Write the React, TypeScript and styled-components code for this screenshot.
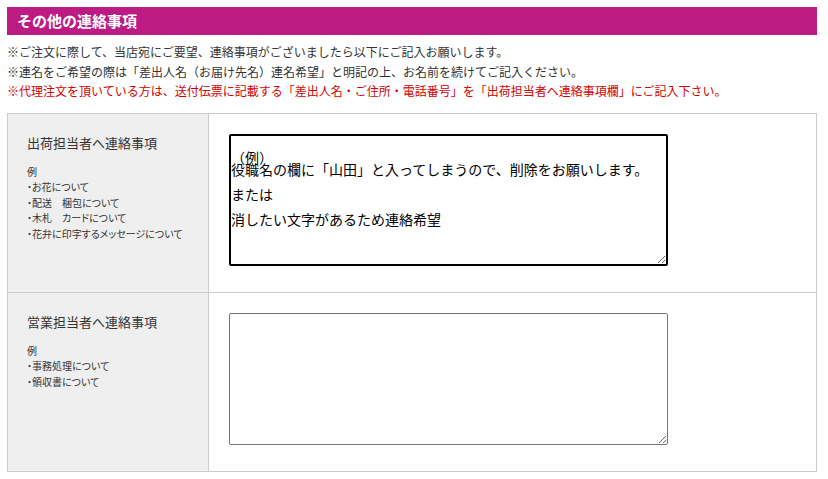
import React from "react";
import styled, { createGlobalStyle } from "styled-components";

const GlobalStyle = createGlobalStyle`
  html, body { margin: 0; padding: 0; background: #fff; }
  body { font-family: "Noto Sans CJK JP", "Noto Sans", sans-serif; color: #333; }
`;

const Page = styled.div`
  padding: 7px 0 0 7px;
  width: 810px;
`;

const SectionBar = styled.h2`
  margin: 0;
  height: 28px;
  background: #bc1b84;
  color: #fff;
  font-size: 15px;
  font-weight: bold;
  line-height: 28px;
  padding-left: 10px;
`;

const Notes = styled.div`
  margin: 7px 0 12px;
`;

const Note = styled.p<{ $red?: boolean }>`
  margin: 0;
  font-size: 12px;
  line-height: 19.5px;
  color: ${(p) => (p.$red ? "#d40000" : "#333")};
  white-space: nowrap;
`;

const Table = styled.div`
  border: 1px solid #ccc;
  display: grid;
  grid-template-columns: 201px 1fr;
`;

const LabelCell = styled.div<{ $last?: boolean }>`
  box-sizing: border-box;
  background: #efefef;
  border-right: 1px solid #ccc;
  border-bottom: ${(p) => (p.$last ? "none" : "1px solid #ccc")};
  padding: 20px 0 0 19px;
`;

const ValueCell = styled.div<{ $last?: boolean }>`
  border-bottom: ${(p) => (p.$last ? "none" : "1px solid #ccc")};
  padding: 20px 20px 26px 20px;
`;

const LabelTitle = styled.div`
  font-size: 13px;
  line-height: 18px;
  color: #333;
  margin-bottom: 12px;
`;

const ExampleLine = styled.div`
  font-size: 10px;
  line-height: 15.5px;
  color: #333;
  font-feature-settings: "palt";
  white-space: nowrap;
`;

const Memo = styled.textarea<{ $active?: boolean }>`
  display: block;
  box-sizing: border-box;
  width: 439px;
  height: 132px;
  margin: 0;
  padding: ${(p) => (p.$active ? "15px 0 0 0" : "15px 1px 0 1px")};
  font-family: "Noto Sans CJK JP", sans-serif;
  font-size: 14px;
  line-height: 12.5px;
  color: #000;
  background: #fff;
  border: ${(p) => (p.$active ? "2px solid #000" : "1px solid #767676")};
  border-radius: 2px;
  outline: none;
  resize: both;
  overflow: hidden;
`;

type Row = { title: string; items: string[]; value?: string; active?: boolean };

const rows: Row[] = [
  {
    title: "出荷担当者へ連絡事項",
    items: ["・お花について", "・配送　梱包について", "・木札　カードについて", "・花弁に印字するメッセージについて"],
    value:
      "（例）\n役職名の欄に「山田」と入ってしまうので、削除をお願いします。\n\nまたは\n\n消したい文字があるため連絡希望",
    active: true,
  },
  {
    title: "営業担当者へ連絡事項",
    items: ["・事務処理について", "・領収書について"],
  },
];

export default function App() {
  return (
    <>
      <GlobalStyle />
      <Page>
        <SectionBar>その他の連絡事項</SectionBar>
        <Notes>
          <Note>※ご注文に際して、当店宛にご要望、連絡事項がございましたら以下にご記入お願いします。</Note>
          <Note>※連名をご希望の際は「差出人名（お届け先名）連名希望」と明記の上、お名前を続けてご記入ください。</Note>
          <Note $red>※代理注文を頂いている方は、送付伝票に記載する「差出人名・ご住所・電話番号」を「出荷担当者へ連絡事項欄」にご記入下さい。</Note>
        </Notes>
        <Table>
          {rows.map((r, i) => {
            const last = i === rows.length - 1;
            return (
              <React.Fragment key={r.title}>
                <LabelCell $last={last}>
                  <LabelTitle>{r.title}</LabelTitle>
                  <ExampleLine>例</ExampleLine>
                  {r.items.map((it) => (
                    <ExampleLine key={it}>{it}</ExampleLine>
                  ))}
                </LabelCell>
                <ValueCell $last={last}>
                  <Memo $active={r.active} defaultValue={r.value ?? ""} />
                </ValueCell>
              </React.Fragment>
            );
          })}
        </Table>
      </Page>
    </>
  );
}
